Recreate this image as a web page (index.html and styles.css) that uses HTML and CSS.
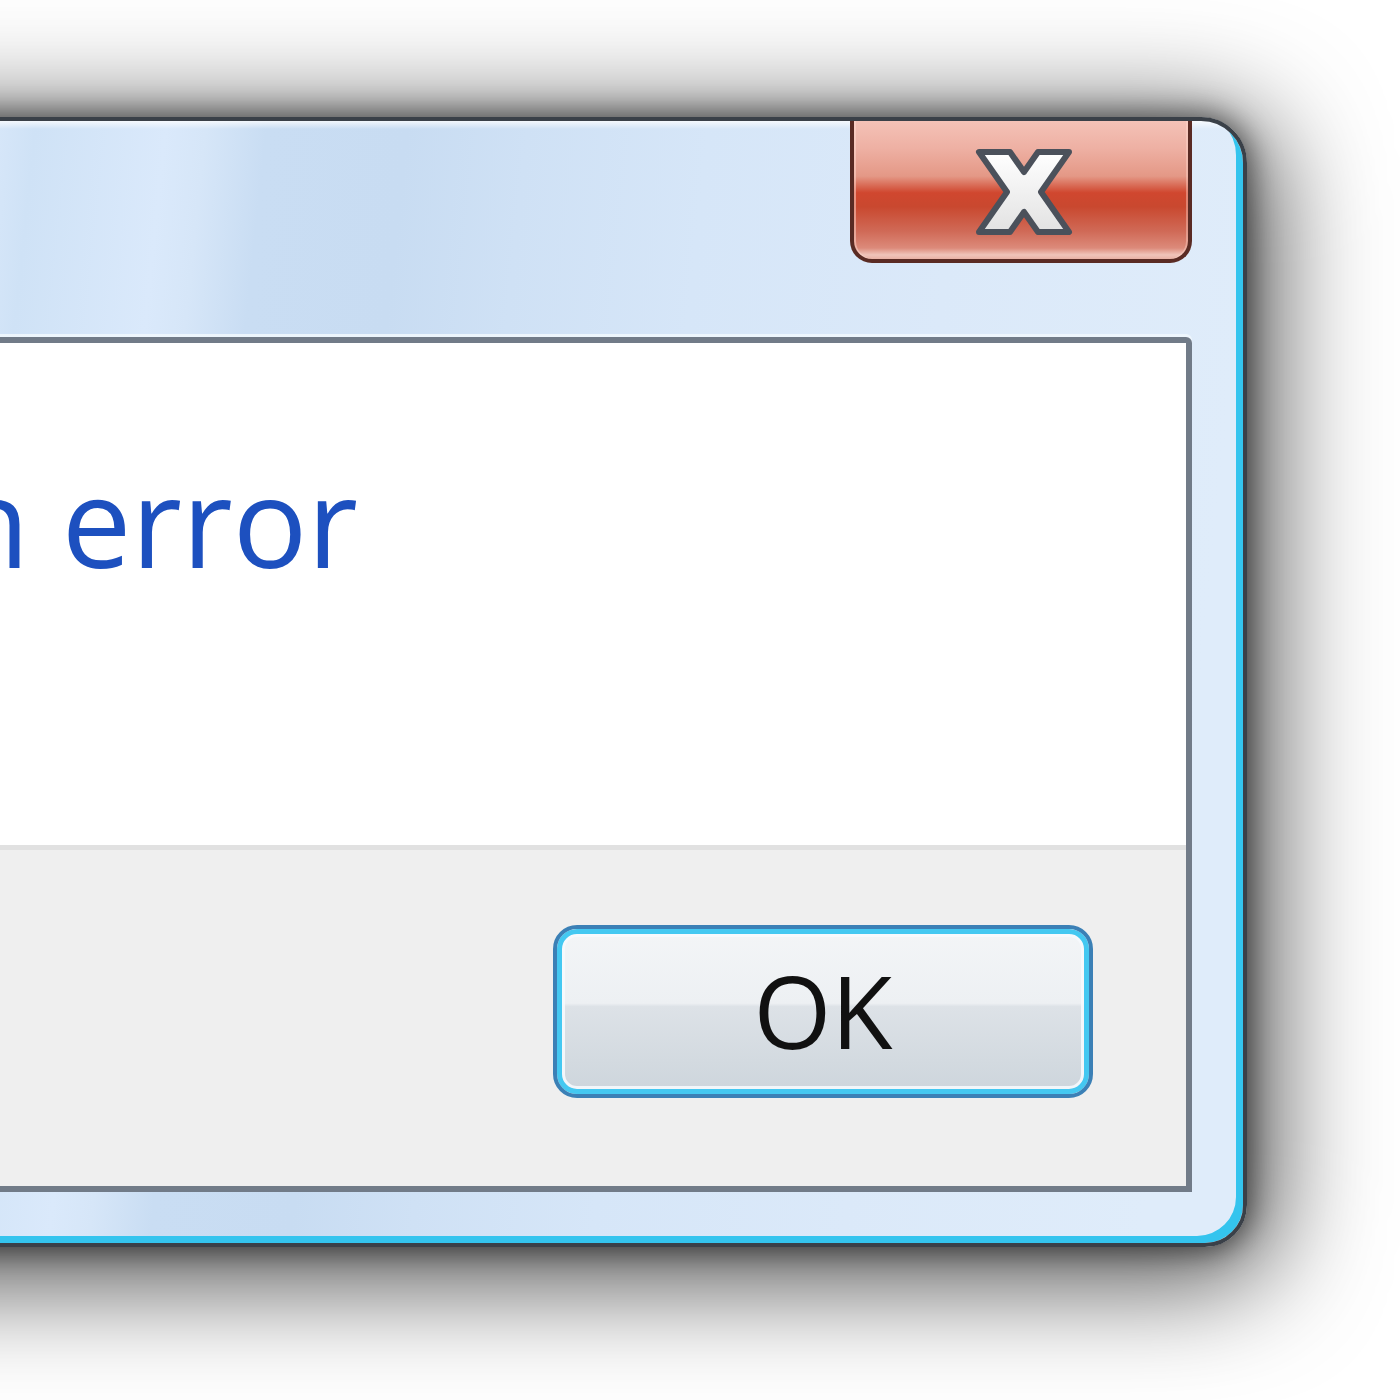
FILE: index.html
```html
<!DOCTYPE html>
<html>
<head>
<meta charset="utf-8">
<link rel="stylesheet" href="styles.css">
</head>
<body>
<div class="stage">
  <div class="window">
    <div class="titlebar">
      <button class="close" aria-label="Close">
        <svg class="close-glyph" viewBox="-6 -6 102 92" width="102" height="92">
          <defs>
            <linearGradient id="xg" x1="0" y1="0" x2="0" y2="1">
              <stop offset="0" stop-color="#ffffff"/>
              <stop offset="1" stop-color="#e2e2e2"/>
            </linearGradient>
          </defs>
          <polygon points="0,0 31,0 45,20 59,0 90,0 62,40 90,80 59,80 45,60 31,80 0,80 28,40" fill="url(#xg)" stroke="#4b515b" stroke-width="6" stroke-linejoin="round"/>
        </svg>
      </button>
    </div>
    <div class="client">
      <div class="content">
        <p class="instruction">An error</p>
      </div>
      <div class="footer">
        <button class="ok">OK</button>
      </div>
    </div>
  </div>
</div>
</body>
</html>
```

FILE: styles.css
```css
html, body {
  margin: 0;
  padding: 0;
  background: #ffffff;
  overflow: hidden;
}

.stage {
  width: 1400px;
  height: 1400px;
  padding-top: 117px;
  box-sizing: border-box;
  overflow: hidden;
}

.window {
  margin-left: -300px;
  width: 1547px;
  height: 1130px;
  box-sizing: border-box;
  border: 4px solid #3a4048;
  border-radius: 0 46px 42px 0;
  padding: 0 51px 51px 51px;
  display: flex;
  flex-direction: column;
  background:
    linear-gradient(180deg, rgba(255,255,255,0.75) 0px, rgba(255,255,255,0) 8px),
    linear-gradient(96deg,
      #dbe9fa 0px, #d9e8fa 280px,
      #cfe2f6 330px, #dae9fb 460px, #d6e6f8 500px,
      #c9ddf3 560px, #c8dcf2 700px, #cfe1f5 820px,
      #d6e6f8 1000px, #dbe9f9 1250px, #dfecfa 1547px);
  box-shadow:
    inset -8px -8px 0 -1px #34c4ee,
    0 0 28px 4px rgba(0,0,0,0.5),
    8px 18px 110px 18px rgba(0,0,0,0.68);
}

.titlebar {
  height: 216px;
  display: flex;
  justify-content: flex-end;
  align-items: flex-start;
  flex: none;
}

.close {
  width: 342px;
  height: 142px;
  padding: 0;
  margin: 0;
  border: 4px solid #5a2b24;
  border-top: none;
  border-radius: 0 0 22px 22px;
  box-sizing: border-box;
  display: flex;
  align-items: center;
  justify-content: center;
  background: linear-gradient(180deg,
    #f4c2b7 0%, #eeb0a3 20%, #e49886 40%,
    #d0472f 52%, #c9482f 62%, #d06a57 80%, #dc8a7a 92%, #f0c4ba 97%, #e9b1a5 100%);
  box-shadow: inset 2px 0 0 rgba(255,220,210,0.5), inset -2px 0 0 rgba(255,220,210,0.4);
}

.close-glyph {
  display: block;
  margin-top: 4px;
  margin-left: 6px;
}

.client {
  flex: 1;
  border: 6px solid #717b88;
  border-radius: 0 6px 0 0;
  display: flex;
  flex-direction: column;
  background: #ffffff;
  box-shadow: 0 -3px 0 0 rgba(240,247,253,0.9);
}

.content {
  height: 507px;
  flex: none;
  background: #ffffff;
  border-bottom: 5px solid #e1e1e1;
  box-sizing: border-box;
  padding-left: 114px;
}

.instruction {
  margin: 0;
  padding-top: 115px;
  font-family: "Open Sans", "Noto Sans", "DejaVu Sans", sans-serif;
  font-size: 124px;
  line-height: 1;
  color: #1d50bf;
  white-space: nowrap;
}

.footer {
  flex: 1;
  background: #efefef;
  display: flex;
  justify-content: flex-end;
  align-items: flex-start;
  padding: 75px 93px 0 0;
}

.ok {
  width: 540px;
  height: 173px;
  box-sizing: border-box;
  border: 4px solid #3b80b6;
  border-radius: 24px;
  box-shadow: inset 0 0 0 5px #44c8f1, inset 0 0 0 8px rgba(246,250,253,0.9);
  background: linear-gradient(180deg,
    #f3f5f7 0%, #edf0f3 45%, #dde2e7 47%, #d3dae0 80%, #cdd5dc 100%);
  font-family: "Open Sans", "Noto Sans", "DejaVu Sans", sans-serif;
  font-size: 100px;
  line-height: 1;
  color: #111111;
  padding: 0 0 4px 0;
  margin: 0;
  display: flex;
  align-items: center;
  justify-content: center;
}
```
